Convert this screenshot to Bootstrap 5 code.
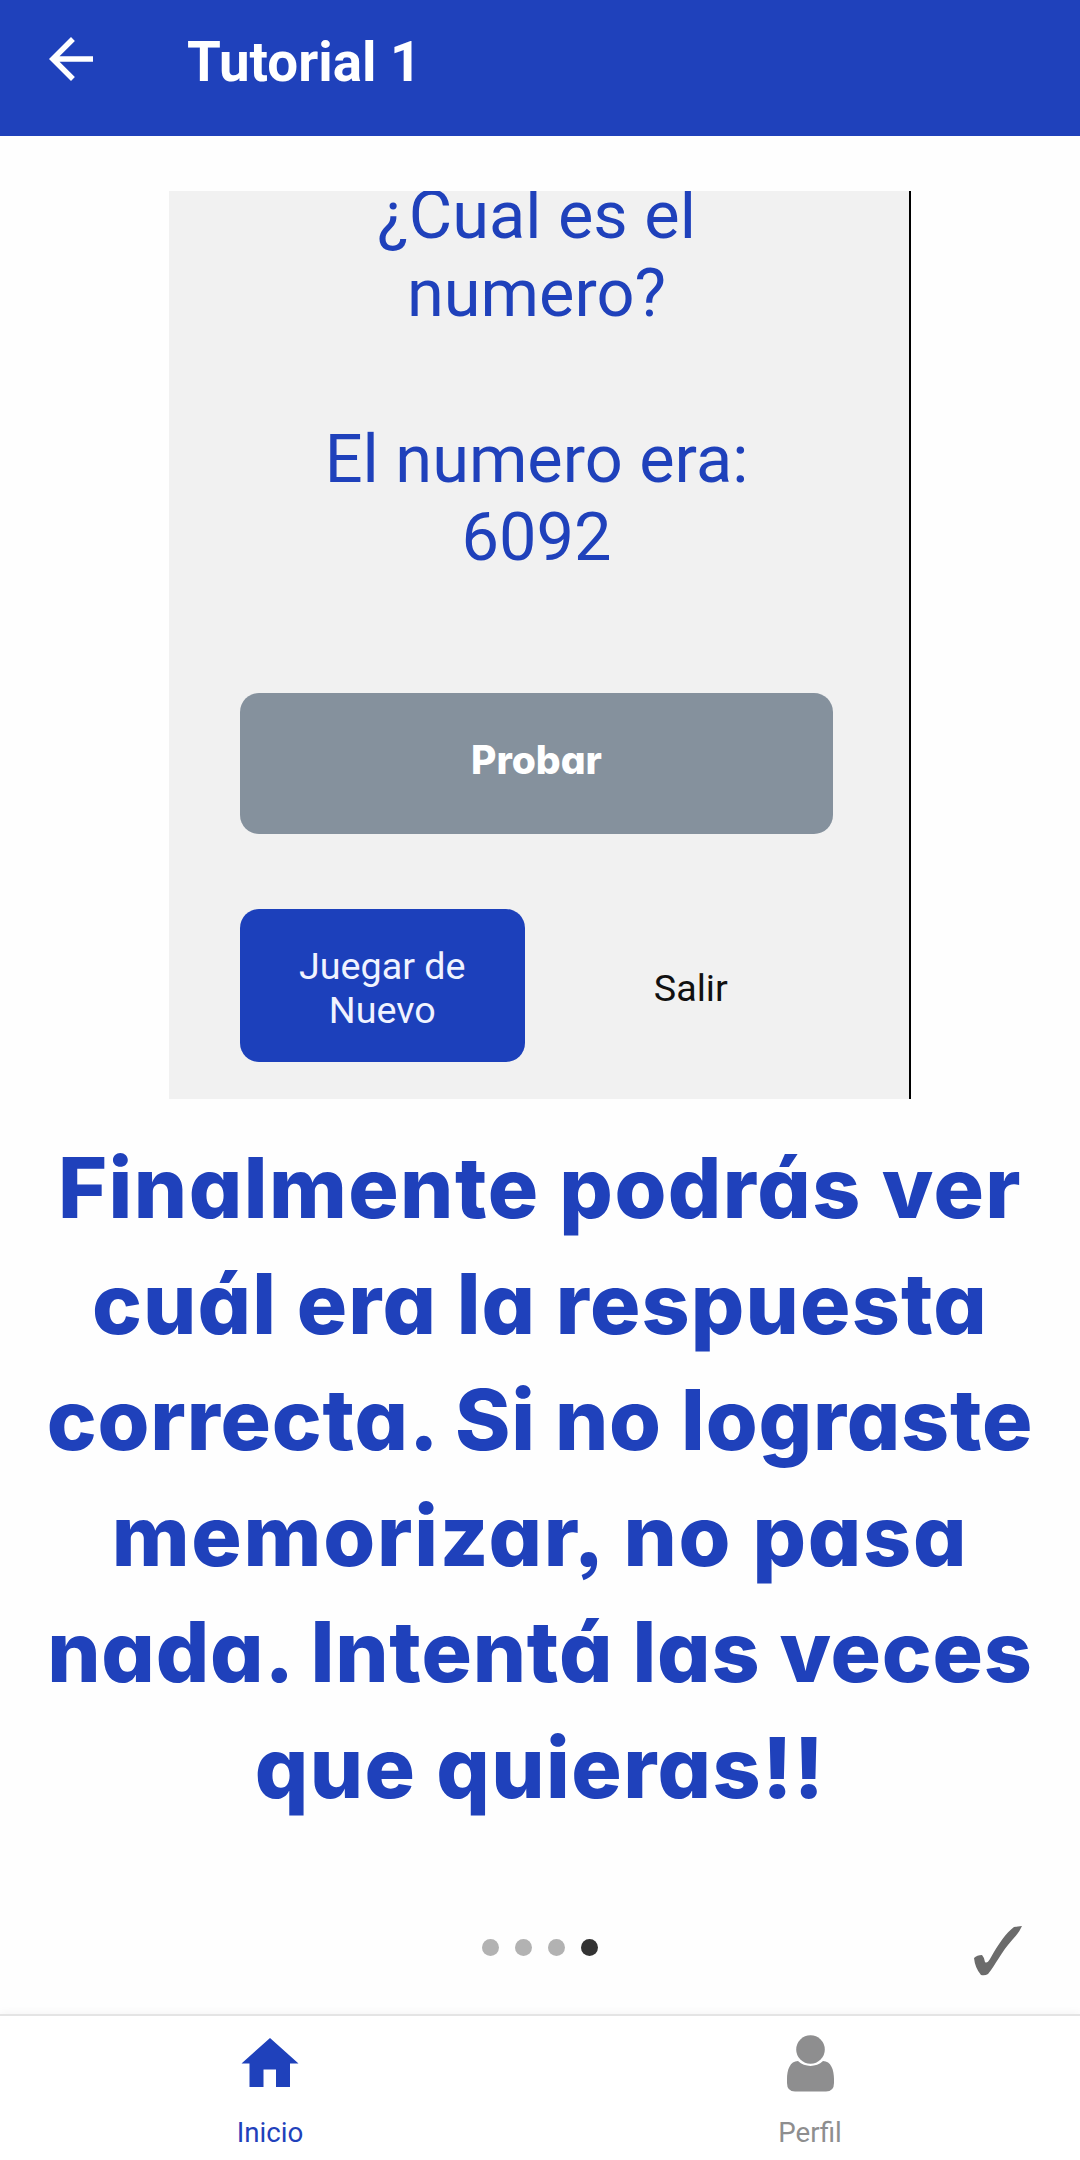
<!DOCTYPE html>
<html lang="es">
<head>
<meta charset="utf-8">
<meta name="viewport" content="width=device-width, initial-scale=1">
<title>Tutorial 1</title>
<link href="https://cdn.jsdelivr.net/npm/bootstrap@5.3.0/dist/css/bootstrap.min.css" rel="stylesheet">
<style>
:root { --brand: #1f41bb; }
body { font-family: Roboto, "Liberation Sans", sans-serif; background: #fefefe; }
.screen { height: 2160px; }
.topbar { height: 136px; padding: 0 38px; background: var(--brand); }
.back-icon { width: 66px; height: 66px; margin-top: -18px; }
.bar-title { font-size: 54.7px; line-height: 60px; margin: -13px 0 0 83px; }
.preview { width: 742px; height: 908px; margin-top: 55px; padding: 0 76px 0 71px; background: #f1f1f1; border-right: 2px solid #000; }
.prompt { font-size: 66.7px; line-height: 78px; color: var(--brand); margin-top: -15px; }
.answer { margin-top: 88px; }
.probar { height: 141px; margin-top: 117px; padding-bottom: 8px; border-radius: 19px; background: #85919d; font: 800 39px Inter, sans-serif; font-feature-settings: "cv11"; }
.choices { height: 153px; margin-top: 75px; gap: 24px; font-size: 37.7px; line-height: 44px; }
.choice { flex: 1 1 0; padding-top: 4px; border-radius: 19px; }
.again { background: #1c40bb; color: #f0f3ff; }
.exit { color: #111; }
.message { margin-top: 31px; font: 760 84px/116px Inter, sans-serif; font-feature-settings: "cv11", "ss03"; color: var(--brand); }
.message span { white-space: nowrap; letter-spacing: .8px; }
.message .wide { letter-spacing: 1.15px; }
.message .wider { letter-spacing: 1.45px; }
.message .widest { letter-spacing: 1.75px; }
.pager { height: 133px; }
.pager-dot { width: 17px; height: 17px; background: #b2b2b2; }
.pager-dot.current { background: #333; }
.dots { gap: 16px; }
.check-icon { width: 80px; height: 80px; right: 40px; top: 29px; }
.tabs { height: 146px; background: #fff; border-top: 2px solid #e4e4e4; box-shadow: 0 -2px 8px rgba(0,0,0,.04); }
.tab { font-size: 27.7px; line-height: 34px; color: #8e8e8f; padding-top: 14px; }
.tab svg { width: 70px; height: 70px; margin-bottom: 16px; }
.tab.current { color: var(--brand); }
</style>
</head>
<body>
<div class="screen d-flex flex-column overflow-hidden">
  <header class="topbar d-flex align-items-center text-white">
    <svg class="back-icon" viewBox="0 0 24 24" fill="currentColor"><path d="M20 11H7.830l5.590-5.590L12 4l-8 8 8 8 1.410-1.410L7.830 13H20z"/></svg>
    <h1 class="bar-title fw-bold">Tutorial 1</h1>
  </header>
  <main class="flex-grow-1 d-flex flex-column align-items-center">
    <section class="preview overflow-hidden d-flex flex-column">
      <div class="prompt text-center">
        <div>¿Cual es el<br>numero?</div>
        <div class="answer">El numero era:<br>6092</div>
      </div>
      <div class="probar d-flex align-items-center justify-content-center text-white">Probar</div>
      <div class="choices d-flex text-center">
        <div class="choice again d-flex align-items-center justify-content-center">Juegar de<br>Nuevo</div>
        <div class="choice exit d-flex align-items-center justify-content-center">Salir</div>
      </div>
    </section>
    <div class="message text-center">
      <span class="wider">Finalmente podrás ver</span><br>
      <span class="wide">cuál era la respuesta</span><br>
      <span>correcta. Si no lograste</span><br>
      <span class="widest">memorizar, no pasa</span><br>
      <span>nada. Intentá las veces</span><br>
      <span class="wider">que quieras!!</span>
    </div>
  </main>
  <div class="pager position-relative d-flex align-items-center justify-content-center">
    <div class="dots d-flex">
      <span class="pager-dot rounded-circle"></span>
      <span class="pager-dot rounded-circle"></span>
      <span class="pager-dot rounded-circle"></span>
      <span class="pager-dot current rounded-circle"></span>
    </div>
    <svg class="check-icon position-absolute" viewBox="0 0 80 80" fill="#6b6b6b"><path d="M14 48q3-3 8-3 2 2 3 7 2 2 5-3C39 33 46 23 54 17l8-1q-3 7-9 13C41 42 35 56 28 64q-3 2-7 1-6-7-7-17z"/></svg>
  </div>
  <nav class="tabs d-flex">
    <div class="tab current col-6 d-flex flex-column align-items-center">
      <svg viewBox="0 0 70 70" fill="currentColor"><path d="M35 8l28.500 25.500h-8.500v23.500h-14v-17.500h-12.500v17.500h-14v-23.500h-8z"/></svg>
      <span>Inicio</span>
    </div>
    <div class="tab col-6 d-flex flex-column align-items-center">
      <svg viewBox="0 0 70 70" fill="currentColor"><circle cx="35.500" cy="19.500" r="14.300"/><path d="M23 31c7 6.500 18 6.500 25 0 8 0 11 9 11 18v4q0 8.500-8 8.500H20q-8 0-8-8.500v-4c0-9 3-18 11-18z"/></svg>
      <span>Perfil</span>
    </div>
  </nav>
</div>
<script src="https://cdn.jsdelivr.net/npm/bootstrap@5.3.0/dist/js/bootstrap.bundle.min.js"></script>
</body>
</html>
